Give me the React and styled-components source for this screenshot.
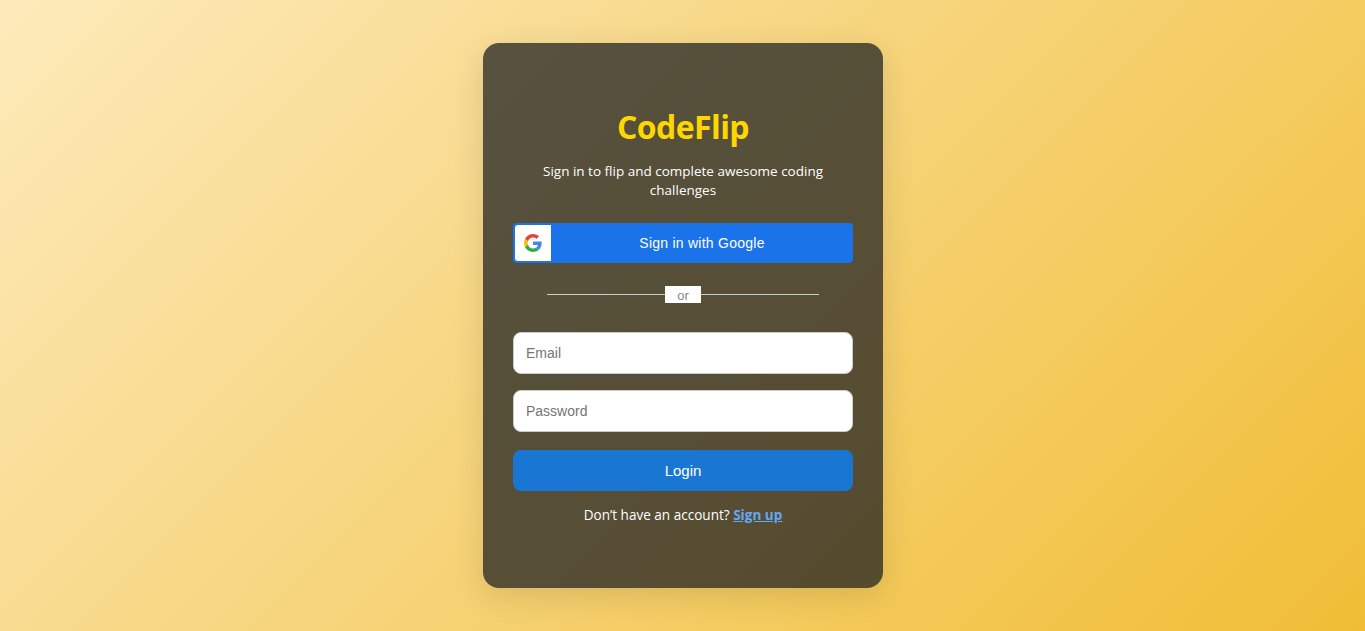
import React from "react";
import styled, { createGlobalStyle } from "styled-components";

const GlobalStyle = createGlobalStyle`
  * { box-sizing: border-box; }
  body {
    margin: 0;
    font-family: "Segoe UI", "Open Sans", "Noto Sans", sans-serif;
  }
`;

const Page = styled.main`
  display: flex;
  justify-content: center;
  align-items: flex-start;
  height: 100vh;
  padding-top: 43px;
  overflow: hidden;
  background: linear-gradient(135deg, #fdeabb 0%, #f0bd35 100%);
`;

const Card = styled.section`
  display: flex;
  flex-direction: column;
  width: 400px;
  height: 545px;
  margin-left: 1px;
  padding: 62px 30px 0;
  border-radius: 16px;
  background: rgba(32, 34, 33, 0.75);
  box-shadow: 0 8px 32px rgba(0, 0, 0, 0.12);
  color: #fff;
  text-align: center;
`;

const Title = styled.h1`
  margin: 0;
  font-size: 32px;
  line-height: 43px;
  font-weight: 700;
  letter-spacing: -0.6px;
  color: #ffd700;
`;

const Subtitle = styled.p`
  margin: 14px 0 23px;
  font-size: 13.5px;
  line-height: 19px;
  white-space: nowrap;
`;

const GoogleButton = styled.button`
  display: flex;
  align-items: center;
  height: 40px;
  padding: 2px;
  border: 0;
  border-radius: 4px;
  background: #1a73e8;
  color: #fff;
  font: 14px "Liberation Sans", Arial, sans-serif;
  letter-spacing: 0.25px;
`;

const GoogleBadge = styled.span`
  display: flex;
  align-items: center;
  justify-content: center;
  width: 36px;
  height: 36px;
  border-radius: 3px 0 0 3px;
  background: #fff;
`;

const ButtonLabel = styled.span`
  flex: 1;
  padding-left: 2px;
`;

const Divider = styled.div`
  display: flex;
  align-items: center;
  width: 272px;
  height: 17px;
  margin: 23px auto 29px;
`;

const Line = styled.span`
  flex: 1;
  height: 1px;
  background: #ccc;
`;

const DividerText = styled.span`
  width: 36px;
  height: 17px;
  background: #fff;
  color: #888;
  font: 13px/19px "Liberation Sans", Arial, sans-serif;
`;

const Input = styled.input`
  width: 100%;
  height: 42px;
  margin: 0 0 16px;
  padding: 0 12px;
  border: 1px solid #ccc;
  border-radius: 8px;
  background: #fff;
  font: 14px "Liberation Sans", Arial, sans-serif;
  &::placeholder { color: #757575; }
`;

const LoginButton = styled.button`
  height: 41px;
  margin-top: 2px;
  padding: 0;
  border: 0;
  border-radius: 8px;
  background: #1976d2;
  color: #fff;
  font: 15px "Liberation Sans", Arial, sans-serif;
`;

const Footer = styled.p`
  margin: 15px 0 0;
  font-size: 13.55px;
  line-height: 19px;
`;

const SignUp = styled.a`
  color: #64a8f5;
  font-weight: 700;
  text-decoration: underline;
  cursor: pointer;
`;

const GoogleLogo = () => (
  <svg width="18" height="18" viewBox="0 0 48 48" aria-hidden="true">
    <path fill="#EA4335" d="M24 9.5c3.54 0 6.71 1.22 9.21 3.6l6.85-6.85C35.9 2.38 30.47 0 24 0 14.62 0 6.51 5.38 2.56 13.22l7.98 6.19C12.43 13.72 17.74 9.5 24 9.5z" />
    <path fill="#4285F4" d="M46.98 24.55c0-1.57-.15-3.09-.38-4.55H24v9.02h12.94c-.58 2.96-2.26 5.48-4.78 7.18l7.73 6c4.51-4.18 7.09-10.36 7.09-17.65z" />
    <path fill="#FBBC05" d="M10.53 28.59c-.48-1.45-.76-2.99-.76-4.59s.27-3.14.76-4.59l-7.98-6.19C.92 16.46 0 20.12 0 24c0 3.88.92 7.54 2.56 10.78l7.97-6.19z" />
    <path fill="#34A853" d="M24 48c6.48 0 11.93-2.13 15.89-5.81l-7.73-6c-2.15 1.45-4.92 2.3-8.16 2.3-6.26 0-11.57-4.22-13.47-9.91l-7.98 6.19C6.51 42.62 14.62 48 24 48z" />
  </svg>
);

export default function App() {
  return (
    <>
      <GlobalStyle />
      <Page>
        <Card>
          <Title>CodeFlip</Title>
          <Subtitle>
            Sign in to flip and complete awesome coding
            <br />
            challenges
          </Subtitle>
          <GoogleButton type="button">
            <GoogleBadge><GoogleLogo /></GoogleBadge>
            <ButtonLabel>Sign in with Google</ButtonLabel>
          </GoogleButton>
          <Divider>
            <Line />
            <DividerText>or</DividerText>
            <Line />
          </Divider>
          <Input type="email" placeholder="Email" />
          <Input type="password" placeholder="Password" />
          <LoginButton type="button">Login</LoginButton>
          <Footer>
            Don’t have an account? <SignUp>Sign up</SignUp>
          </Footer>
        </Card>
      </Page>
    </>
  );
}
